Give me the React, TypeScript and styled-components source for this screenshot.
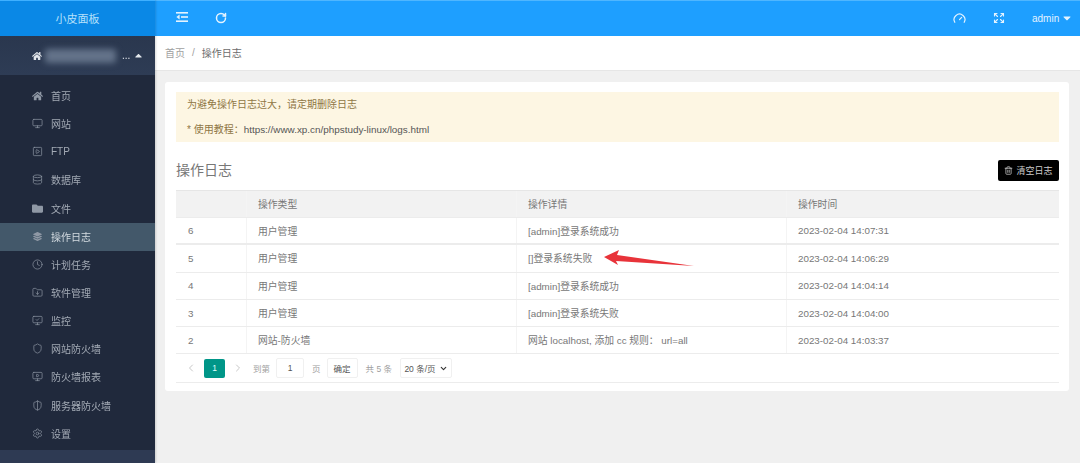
import styled, { createGlobalStyle } from 'styled-components';
import {
    ChevronDown,
    ChevronLeft,
    ChevronRight,
    Clock,
    Database,
    Expand,
    FolderDown,
    Gauge,
    Monitor,
    MonitorCheck,
    MonitorPlay,
    RotateCw,
    Settings,
    Shield,
    ShieldHalf,
    SquarePlay,
    Trash2,
    type LucideIcon,
} from 'lucide-react';
import { FaFolder, FaHome, FaCaretDown, FaCaretUp, FaLayerGroup } from 'react-icons/fa';
import type { ReactNode } from 'react';

const GlobalStyle = createGlobalStyle`
  html, body {
    margin: 0;
    padding: 0;
    height: 463px;
    overflow: hidden;
    background: #f0f0f0;
  }
  * {
    box-sizing: border-box;
  }
  #root {
    font-family: "Liberation Sans", "Noto Sans CJK SC", sans-serif;
    font-size: 10px;
    color: #777;
    filter: blur(0.4px);
  }
`;

const Page = styled.div`
  display: grid;
  grid-template-columns: 155px 1fr;
  width: 1080px;
  height: 463px;
  overflow: hidden;
`;

const Sidebar = styled.aside`
  display: flex;
  flex-direction: column;
  background: #20293c;
  box-shadow: 1px 0 2px rgba(0, 0, 0, 0.15);
  z-index: 1;
`;

const Logo = styled.div`
  height: 36px;
  display: flex;
  align-items: center;
  justify-content: center;
  padding-bottom: 1px;
  background: #0a88e6;
  border-top: 1px solid #3fb0ff;
  color: #b5e0fb;
  font-size: 11px;
`;

const UserBlock = styled.div`
  height: 39px;
  display: flex;
  align-items: center;
  padding-left: 32px;
  gap: 3px;
  background: linear-gradient(#2a374e, #2e3c55);
  color: #e3e7ec;
`;

const BlurredName = styled.div`
  width: 71px;
  height: 14px;
  margin-right: 3px;
  background: #64738a;
  border-radius: 3px;
  filter: blur(3px);
`;

const MenuList = styled.nav`
  display: flex;
  flex-direction: column;
  padding-top: 7px;
  flex: 1;
`;

const MenuItem = styled.div<{ $active?: boolean }>`
  height: 28.15px;
  display: flex;
  align-items: center;
  gap: 8px;
  padding-left: 32px;
  padding-bottom: 1px;
  color: ${(props) => (props.$active ? '#d4dbe1' : '#a3aab5')};
  background: ${(props) => (props.$active ? '#43586a' : 'transparent')};
`;

const MenuIcon = styled.span`
  width: 11px;
  display: flex;
  justify-content: center;
  color: #8f98a5;
`;

const SidebarFooter = styled.div`
  height: 13px;
  background: #2e3a53;
`;

const Main = styled.main`
  display: flex;
  flex-direction: column;
  min-width: 0;
`;

const Header = styled.header`
  height: 36px;
  display: flex;
  align-items: center;
  padding-bottom: 1px;
  background: #1e9fff;
  border-top: 1px solid #4fb6ff;
  color: #e4f3ff;
`;

const HeaderButton = styled.span<{ $width: number }>`
  width: ${(props) => props.$width}px;
  display: flex;
  justify-content: center;
`;

const HeaderLeft = styled.div`
  display: flex;
  padding-left: 7px;
  flex: 1;
`;

const HeaderRight = styled.div`
  display: flex;
  align-items: center;
`;

const AdminMenu = styled.div`
  display: flex;
  align-items: center;
  gap: 2px;
  width: 48px;
  margin-left: 14px;
  font-size: 10px;
`;

const Breadcrumb = styled.div`
  height: 35px;
  display: flex;
  align-items: center;
  gap: 7px;
  padding: 0 0 2px 10px;
  background: #fff;
  border-bottom: 1px solid #e6e6e6;
`;

const Crumb = styled.span<{ $muted?: boolean }>`
  color: ${(props) => (props.$muted ? '#a0a0a0' : '#6c6c6c')};
`;

const Content = styled.div`
  padding: 11px 11px 0 10px;
`;

const Card = styled.section`
  height: 309px;
  padding: 10px 10px 0 11px;
  background: #fff;
  border-radius: 3px;
`;

const Notice = styled.div`
  height: 50px;
  padding: 5px 11px;
  background: #fdf6e3;
  color: #8f7645;
  line-height: 16px;
  display: flex;
  flex-direction: column;
  gap: 9px;
`;

const NoticeLink = styled.span`
  color: #555;
  font-size: 9.9px;
`;

const TitleRow = styled.div`
  height: 48px;
  display: flex;
  align-items: center;
  justify-content: space-between;
  padding-top: 6px;
`;

const Title = styled.h2`
  margin: 0;
  font-size: 14px;
  font-weight: 400;
  color: #777;
`;

const ClearButton = styled.button`
  width: 61px;
  height: 21px;
  display: flex;
  align-items: center;
  justify-content: center;
  gap: 3px;
  margin-top: 3px;
  padding: 0;
  border: 0;
  border-radius: 2px;
  background: #000;
  color: #ccc;
  font-family: inherit;
  font-size: 9px;
`;

const TableWrap = styled.div`
  position: relative;
`;

const Row = styled.div<{ $head?: boolean; $height?: number; $thick?: boolean }>`
  display: grid;
  grid-template-columns: 70px 270px 270px 1fr;
  height: ${(props) => props.$height ?? 27.3}px;
  background: ${(props) => (props.$head ? '#f2f2f2' : '#fff')};
  border-bottom: ${(props) => (props.$thick ? '2px solid #ececec' : '1px solid #ececec')};
  border-top: ${(props) => (props.$head ? '1px solid #e6e6e6' : '0')};
`;

const Cell = styled.div`
  display: flex;
  align-items: center;
  padding-left: 11px;
  border-left: 1px solid #f4f4f4;
  font-size: 9.8px;
  color: #777;
  white-space: nowrap;

  &:first-child {
    padding-left: 12px;
    border-left: 0;
  }
`;

const Arrow = styled.svg`
  position: absolute;
  left: 428px;
  top: 60px;
`;

const Pager = styled.div`
  height: 29px;
  display: flex;
  align-items: center;
  padding-left: 9px;
  border-bottom: 1px solid #ececec;
  font-size: 8.5px;
`;

const PageArrow = styled.span<{ $gap: number }>`
  display: flex;
  color: #c8c8c8;
  margin-right: ${(props) => props.$gap}px;
`;

const CurrentPage = styled.span`
  width: 21px;
  height: 19px;
  display: flex;
  align-items: center;
  justify-content: center;
  margin-right: 7px;
  background: #009688;
  border-radius: 2px;
  color: #dff;
`;

const PageLabel = styled.span<{ $gap: number }>`
  margin-right: ${(props) => props.$gap}px;
  color: #a0a0a0;
`;

const PageBox = styled.span<{ $width: number; $gap: number }>`
  width: ${(props) => props.$width}px;
  height: 20px;
  display: flex;
  align-items: center;
  justify-content: center;
  gap: 3px;
  margin-right: ${(props) => props.$gap}px;
  border: 1px solid #f0f0f0;
  border-radius: 2px;
  color: #555;
  white-space: nowrap;
`;

function icon(Icon: LucideIcon) {
    return <Icon size={11} strokeWidth={1.5} />;
}

const menuItems: { label: string; icon: ReactNode; active?: boolean }[] = [
    { label: '首页', icon: <FaHome size={12} /> },
    { label: '网站', icon: icon(Monitor) },
    { label: 'FTP', icon: icon(SquarePlay) },
    { label: '数据库', icon: icon(Database) },
    { label: '文件', icon: <FaFolder size={11} /> },
    { label: '操作日志', icon: <FaLayerGroup size={9} />, active: true },
    { label: '计划任务', icon: icon(Clock) },
    { label: '软件管理', icon: icon(FolderDown) },
    { label: '监控', icon: icon(MonitorCheck) },
    { label: '网站防火墙', icon: icon(Shield) },
    { label: '防火墙报表', icon: icon(MonitorPlay) },
    { label: '服务器防火墙', icon: icon(ShieldHalf) },
    { label: '设置', icon: icon(Settings) },
];

const logs = [
    { id: 6, type: '用户管理', detail: '[admin]登录系统成功', time: '2023-02-04 14:07:31' },
    { id: 5, type: '用户管理', detail: '[]登录系统失败', time: '2023-02-04 14:06:29' },
    { id: 4, type: '用户管理', detail: '[admin]登录系统成功', time: '2023-02-04 14:04:14' },
    { id: 3, type: '用户管理', detail: '[admin]登录系统失败', time: '2023-02-04 14:04:00' },
    { id: 2, type: '网站-防火墙', detail: '网站 localhost, 添加 cc 规则： url=all', time: '2023-02-04 14:03:37' },
];

const App = () => {
    return (
        <>
            <GlobalStyle />
            <Page>
                <Sidebar>
                    <Logo>小皮面板</Logo>
                    <UserBlock>
                        <FaHome size={10} />
                        <BlurredName />
                        <span>...</span>
                        <FaCaretUp size={11} />
                    </UserBlock>
                    <MenuList>
                        {menuItems.map((item) => (
                            <MenuItem key={item.label} $active={item.active}>
                                <MenuIcon>{item.icon}</MenuIcon>
                                {item.label}
                            </MenuItem>
                        ))}
                    </MenuList>
                    <SidebarFooter />
                </Sidebar>

                <Main>
                    <Header>
                        <HeaderLeft>
                            <HeaderButton $width={39}>
                                <svg width="12" height="10" viewBox="0 0 12 10" fill="currentColor">
                                    <rect x="0" y="0" width="12" height="1.6" />
                                    <rect x="5" y="4.2" width="7" height="1.6" />
                                    <rect x="0" y="8.4" width="12" height="1.6" />
                                    <path d="M3.6 2.6 L0.4 5 L3.6 7.4 Z" />
                                </svg>
                            </HeaderButton>
                            <HeaderButton $width={39}>
                                <RotateCw size={12} strokeWidth={3} />
                            </HeaderButton>
                        </HeaderLeft>
                        <HeaderRight>
                            <HeaderButton $width={39}>
                                <Gauge size={13} strokeWidth={2.2} />
                            </HeaderButton>
                            <HeaderButton $width={39}>
                                <Expand size={12} strokeWidth={2.2} />
                            </HeaderButton>
                            <AdminMenu>
                                admin
                                <FaCaretDown size={12} />
                            </AdminMenu>
                        </HeaderRight>
                    </Header>

                    <Breadcrumb>
                        <Crumb $muted>首页</Crumb>
                        <Crumb $muted>/</Crumb>
                        <Crumb>操作日志</Crumb>
                    </Breadcrumb>

                    <Content>
                        <Card>
                            <Notice>
                                <div>为避免操作日志过大，请定期删除日志</div>
                                <div>
                                    * 使用教程：<NoticeLink>https://www.xp.cn/phpstudy-linux/logs.html</NoticeLink>
                                </div>
                            </Notice>

                            <TitleRow>
                                <Title>操作日志</Title>
                                <ClearButton>
                                    <Trash2 size={9} />
                                    清空日志
                                </ClearButton>
                            </TitleRow>

                            <TableWrap>
                                <Row $head $height={28}>
                                    <Cell />
                                    <Cell>操作类型</Cell>
                                    <Cell>操作详情</Cell>
                                    <Cell>操作时间</Cell>
                                </Row>
                                {logs.map((log, index) => (
                                    <Row key={log.id} $thick={index === 0}>
                                        <Cell>{log.id}</Cell>
                                        <Cell>{log.type}</Cell>
                                        <Cell>{log.detail}</Cell>
                                        <Cell>{log.time}</Cell>
                                    </Row>
                                ))}
                                <Arrow width="90" height="20" viewBox="0 0 90 20">
                                    <path d="M0 7 L15 0 L13 5 L90 16 L12 11 L14 15 Z" fill="#e8333a" />
                                </Arrow>
                                <Pager>
                                    <PageArrow $gap={7}><ChevronLeft size={12} /></PageArrow>
                                    <CurrentPage>1</CurrentPage>
                                    <PageArrow $gap={9}><ChevronRight size={12} /></PageArrow>
                                    <PageLabel $gap={6}>到第</PageLabel>
                                    <PageBox $width={28} $gap={8}>1</PageBox>
                                    <PageLabel $gap={6}>页</PageLabel>
                                    <PageBox $width={31} $gap={8}>确定</PageBox>
                                    <PageLabel $gap={8}>共 5 条</PageLabel>
                                    <PageBox $width={52} $gap={0}>
                                        20 条/页
                                        <ChevronDown size={9} strokeWidth={3} color="#333" />
                                    </PageBox>
                                </Pager>
                            </TableWrap>
                        </Card>
                    </Content>
                </Main>
            </Page>
        </>
    );
};

export default App;
